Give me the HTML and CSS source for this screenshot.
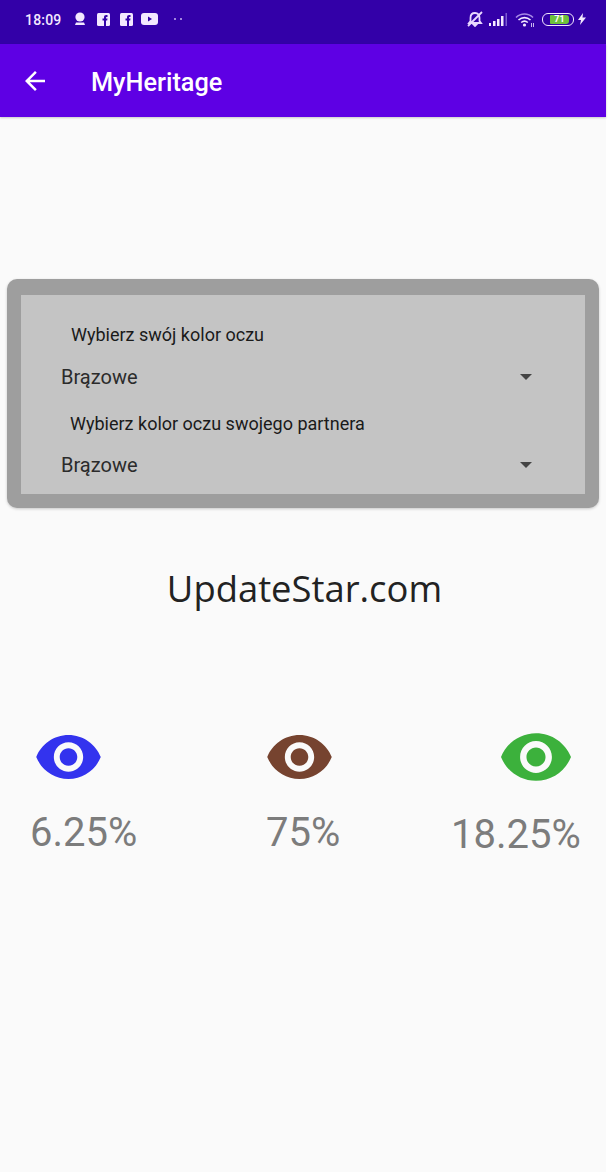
FILE: index.html
```html
<!DOCTYPE html>
<html lang="pl">
<head>
<meta charset="utf-8">
<title>MyHeritage</title>
<link rel="stylesheet" href="styles.css">
</head>
<body>
<div class="app">
  <header class="status">
    <div class="status-left">
      <span class="time">18:09</span>
      <svg class="si si-award" viewBox="0 0 12 14"><circle cx="6" cy="5" r="4.6" fill="#f3e8ff"/><path d="M2 10.5h8l1 2.5H1z" fill="#f3e8ff"/></svg>
      <svg class="si si-fb" viewBox="0 0 13 13"><rect width="13" height="13" rx="1.5" fill="#f3e8ff"/><path d="M7 13V7.6H5.5V5.6H7V4.2C7 2.9 7.9 2 9.2 2h1.3v2H9.6c-.4 0-.6.2-.6.6v1h1.5l-.3 2H9V13z" fill="#3300a8"/></svg>
      <svg class="si si-fb si-fb2" viewBox="0 0 13 13"><rect width="13" height="13" rx="1.5" fill="#f3e8ff"/><path d="M7 13V7.6H5.5V5.6H7V4.2C7 2.9 7.9 2 9.2 2h1.3v2H9.6c-.4 0-.6.2-.6.6v1h1.5l-.3 2H9V13z" fill="#3300a8"/></svg>
      <svg class="si si-yt" viewBox="0 0 17 12"><rect width="17" height="12" rx="3" fill="#f3e8ff"/><path d="M7 3.6v4.8L11 6z" fill="#3300a8"/></svg>
      <span class="dots">
        <span class="dot"></span>
        <span class="dot"></span>
      </span>
    </div>
    <div class="status-right">
      <svg class="si si-bell" viewBox="0 0 18 16"><path d="M9 2c-3 0-4.500 2-4.500 5v3L3 12h12l-1.500-2V7C13.500 4 12 2 9 2zM7.500 13.500h3L9 15zM2 15 16 1" fill="none" stroke="#e9d8ff" stroke-width="1.800"/></svg>
      <svg class="si si-signal" viewBox="0 0 18 13"><path d="M0 10h2v3H0zM4 8h2.500v5H4zM8 6h2.500v7H8zM12 3h2.500v10H12z" fill="#f3e8ff"/><path d="M16.500 0H18v13h-1.500z" fill="#7d5cd0"/></svg>
      <svg class="si si-wifi" viewBox="0 0 20 15"><path d="M1 5.500C6 .8 13 .8 18 5.500" fill="none" stroke="#a88ae6" stroke-width="1.600"/><path d="M3.500 8C7 4.800 12 4.800 15.500 8" fill="none" stroke="#f3e8ff" stroke-width="1.600"/><path d="M6.200 10.500c2-1.600 4.600-1.600 6.600 0" fill="none" stroke="#f3e8ff" stroke-width="1.600"/><circle cx="9.500" cy="13" r="1.600" fill="#f3e8ff"/><path d="M16 11h1v4h-1zM18 11h1v4h-1z" fill="#c8b4f0"/></svg>
      <div class="battery"><span class="battery-fill">71</span></div>
      <svg class="si si-bolt" viewBox="0 0 8 12"><path d="M5 0 0 7h3l-1 5 6-7.500H4.500z" fill="#f3e8ff"/></svg>
    </div>
  </header>
  <nav class="toolbar">
    <svg class="back" viewBox="0 0 24 24"><path d="M20 11H7.830l5.590-5.590L12 4l-8 8 8 8 1.410-1.410L7.830 13H20z" fill="#fff"/></svg>
    <h1 class="title">MyHeritage</h1>
  </nav>
  <main class="content">
    <section class="card">
      <div class="panel">
        <p class="label">Wybierz swój kolor oczu</p>
        <div class="select"><span>Brązowe</span><span class="caret"></span></div>
        <p class="label label-second">Wybierz kolor oczu swojego partnera</p>
        <div class="select"><span>Brązowe</span><span class="caret"></span></div>
      </div>
    </section>
    <p class="brand">UpdateStar.com</p>
    <section class="results">
      <div class="result result-blue">
        <svg class="eye" viewBox="1 4.500 22 15"><path d="M12 4.500C7 4.500 2.730 7.610 1 12c1.730 4.390 6 7.500 11 7.500s9.270-3.110 11-7.500c-1.730-4.390-6-7.500-11-7.500zM12 17c-2.760 0-5-2.240-5-5s2.240-5 5-5 5 2.240 5 5-2.240 5-5 5zm0-8c-1.660 0-3 1.340-3 3s1.340 3 3 3 3-1.340 3-3-1.340-3-3-3z" fill="#3333ee"/></svg>
        <span class="pct">6.25%</span>
      </div>
      <div class="result result-brown">
        <svg class="eye" viewBox="1 4.500 22 15"><path d="M12 4.500C7 4.500 2.730 7.610 1 12c1.730 4.390 6 7.500 11 7.500s9.270-3.110 11-7.500c-1.730-4.390-6-7.500-11-7.500zM12 17c-2.760 0-5-2.240-5-5s2.240-5 5-5 5 2.240 5 5-2.240 5-5 5zm0-8c-1.660 0-3 1.340-3 3s1.340 3 3 3 3-1.340 3-3-1.340-3-3-3z" fill="#76432f"/></svg>
        <span class="pct">75%</span>
      </div>
      <div class="result result-green">
        <svg class="eye" viewBox="1 4.500 22 15"><path d="M12 4.500C7 4.500 2.730 7.610 1 12c1.730 4.390 6 7.500 11 7.500s9.270-3.110 11-7.500c-1.730-4.390-6-7.500-11-7.500zM12 17c-2.760 0-5-2.240-5-5s2.240-5 5-5 5 2.240 5 5-2.240 5-5 5zm0-8c-1.660 0-3 1.340-3 3s1.340 3 3 3 3-1.340 3-3-1.340-3-3-3z" fill="#3cb13c"/></svg>
        <span class="pct">18.25%</span>
      </div>
    </section>
  </main>
</div>
</body>
</html>
```

FILE: styles.css
```css
* { box-sizing: border-box; }
html, body { margin: 0; padding: 0; background: #fff; }
body { font-family: Roboto, "Liberation Sans", sans-serif; width: 611px; height: 1172px; overflow: hidden; }
.app { width: 606px; height: 1172px; background: #fafafa; display: flex; flex-direction: column; }

.status { height: 44px; background: #3300a8; color: #f3e8ff; display: flex; justify-content: space-between; align-items: center; padding: 0 20px 6px 25px; flex: none; }
.status-left, .status-right { display: flex; align-items: center; }
.time { font-size: 14px; font-weight: 500; line-height: 16px; letter-spacing: .2px; margin-top: 2px; }
.si { display: block; flex: none; }
.si-award { width: 12px; height: 14px; margin-left: 12px; }
.si-fb { width: 13px; height: 13px; margin-left: 11px; }
.si-fb2 { margin-left: 10px; }
.si-yt { width: 17px; height: 12px; margin-left: 8px; }
.dots { display: flex; gap: 4px; margin-left: 16px; }
.dot { width: 2px; height: 2px; border-radius: 50%; background: #c8b4f0; }
.si-bell { width: 18px; height: 16px; }
.si-signal { width: 18px; height: 13px; margin-left: 5px; }
.si-wifi { width: 20px; height: 15px; margin-left: 8px; }
.battery { width: 32px; height: 13px; margin-left: 7px; border: 1px solid #f3e8ff; border-radius: 6px; padding: 1px 2px 1px 7px; display: flex; }
.battery-fill { width: 19px; background: #6fc13c; color: #fff; font-size: 9px; font-weight: 700; line-height: 9px; text-align: center; border-radius: 1px 3px 3px 1px; }
.si-bolt { width: 8px; height: 12px; margin-left: 4px; }

.toolbar { height: 73px; background: #5e00e4; display: flex; align-items: center; padding-left: 20px; flex: none; box-shadow: 0 1px 2px rgba(0,0,0,.2); }
.back { width: 30px; height: 30px; }
.title { margin: 4px 0 0 41px; color: #fff; font-size: 25.300px; font-weight: 500; line-height: 28px; }

.content { flex: 1; padding-top: 162px; }
.card { margin: 0 7px; height: 229px; background: #9e9e9e; border-radius: 10px; padding: 16px 14px 14px; box-shadow: 0 1px 3px rgba(0,0,0,.2); }
.panel { height: 199px; background: #c4c4c4; padding-top: 30px; }
.label { margin: 0 0 0 50px; font-size: 18px; line-height: 20px; color: #1a1a1a; }
.label-second { margin-left: 49px; line-height: 19px; }
.select { height: 48px; display: flex; justify-content: space-between; align-items: center; padding: 16px 53px 0 40px; font-size: 20px; color: #2b2b2b; margin-bottom: 21px; }
.select:last-child { margin-bottom: 0; }
.caret { width: 0; height: 0; border-left: 6.500px solid transparent; border-right: 6.500px solid transparent; border-top: 6.500px solid #444; }

.brand { margin: 57px 0 0; padding-left: 3px; text-align: center; font-family: "Open Sans", "Noto Sans", sans-serif; font-size: 36.400px; line-height: 46px; color: #222; }

.results { margin-top: 124px; height: 130px; display: flex; }
.result { display: flex; flex-direction: column; }
.result-blue { width: 238px; padding-left: 30px; }
.result-brown { width: 185px; padding-left: 28px; }
.result-green { padding-left: 28px; }
.eye { display: block; width: 65px; height: 44px; }
.result-blue .eye { margin-left: 6px; }
.result-brown .eye { margin-left: 1px; }
.result-green .eye { width: 70px; height: 48px; margin-left: 50px; margin-top: -2px; }
.pct { font-size: 40px; line-height: 47px; color: #7c7c7c; margin-top: 30px; white-space: nowrap; }
```
